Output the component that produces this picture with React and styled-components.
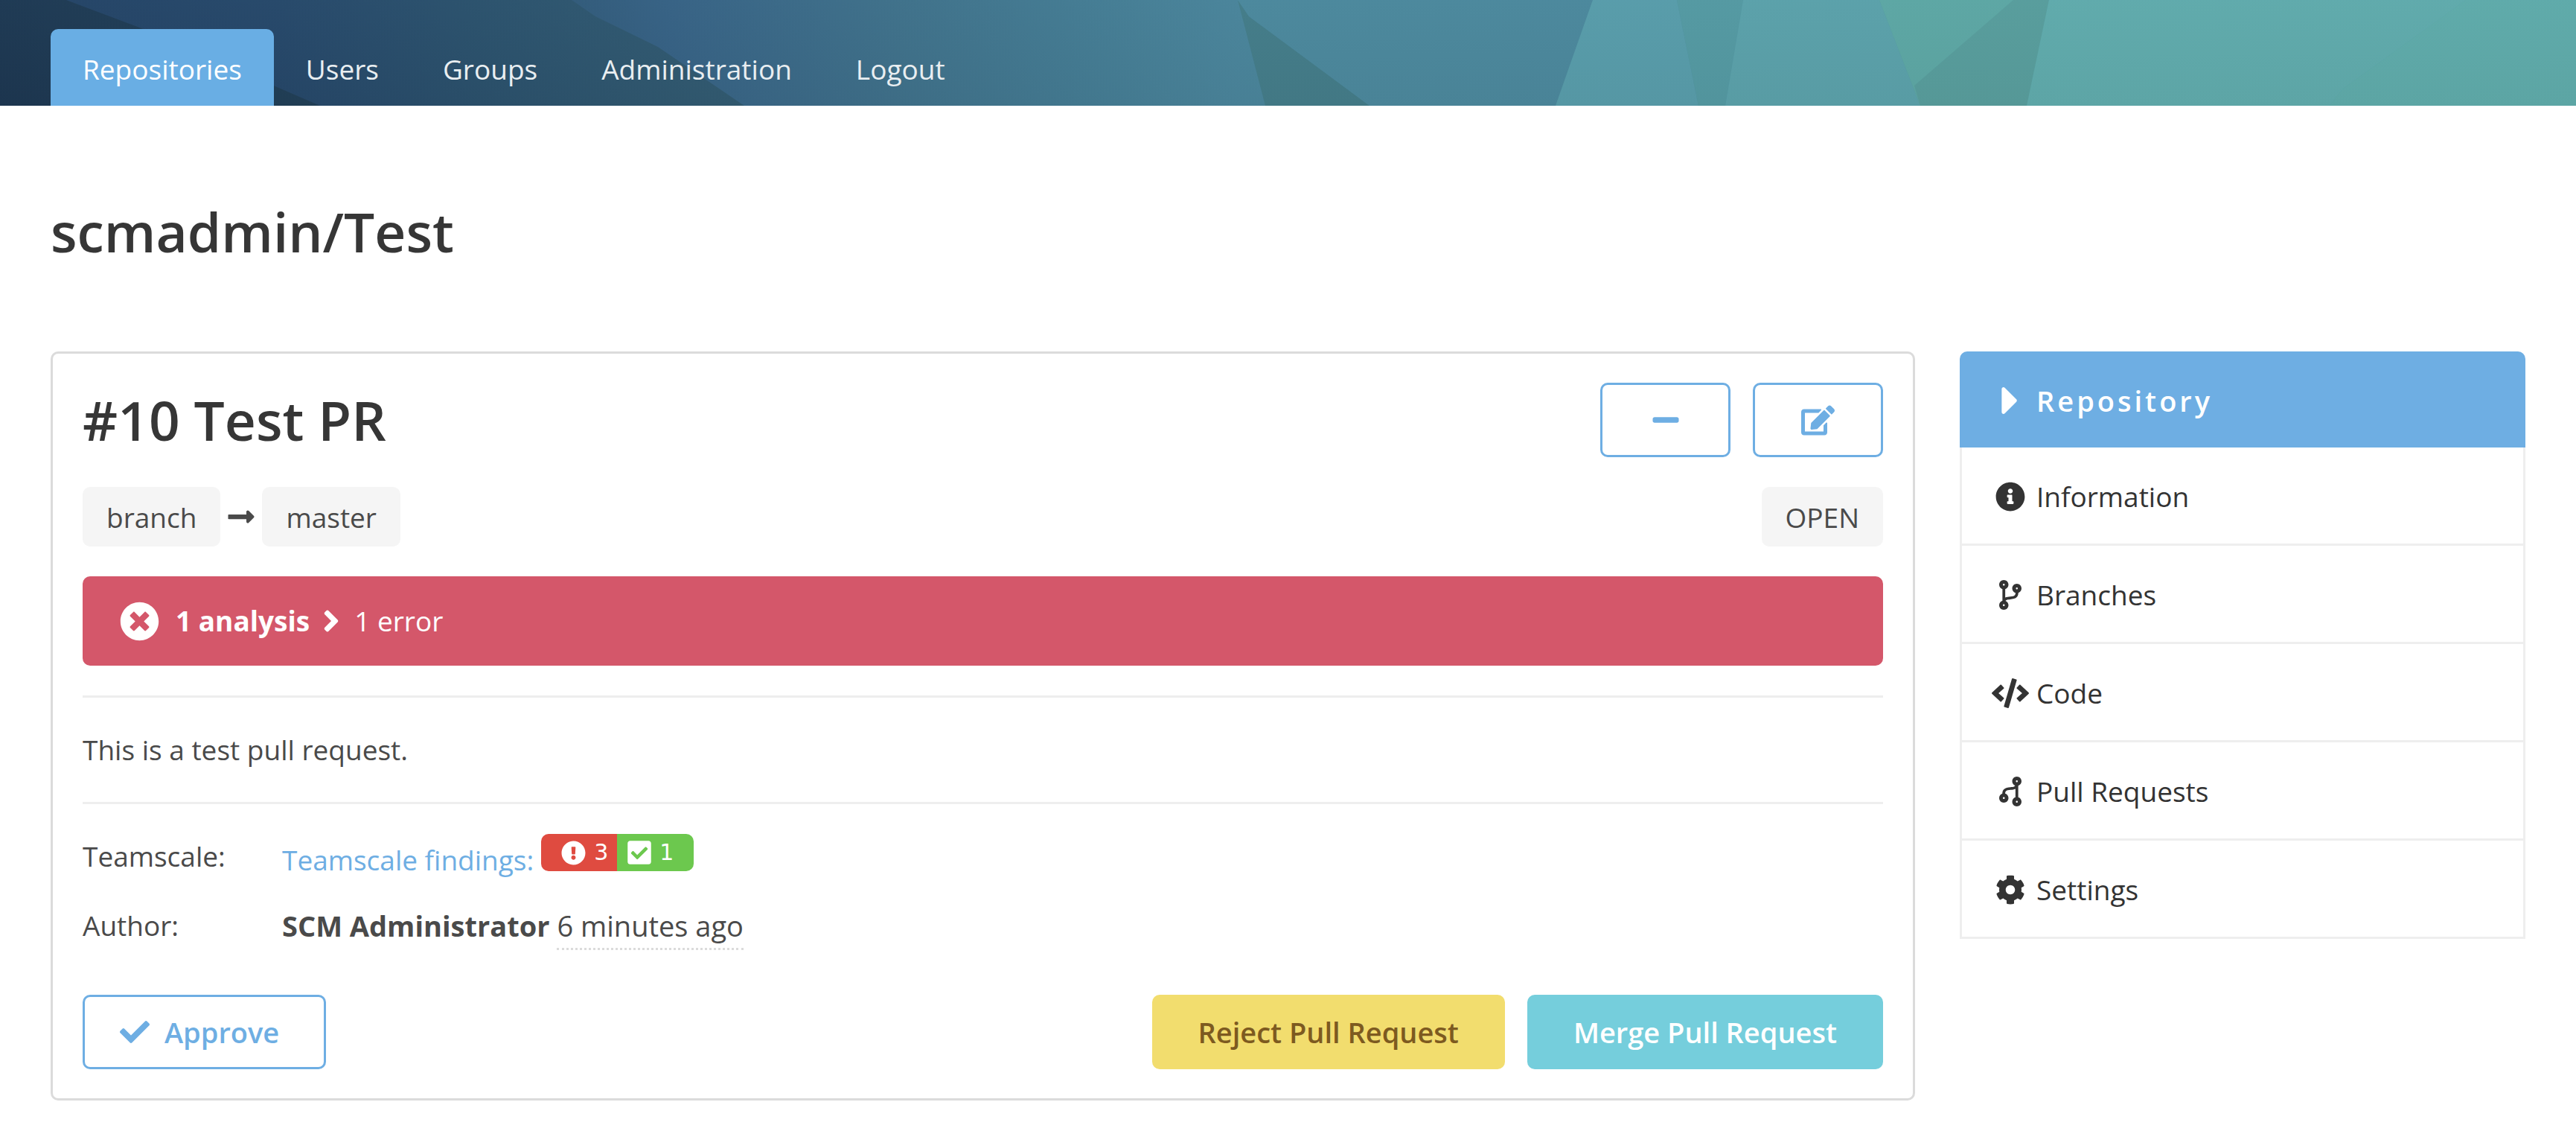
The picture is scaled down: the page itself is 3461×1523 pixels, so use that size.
import React from "react";
import styled, { createGlobalStyle, css } from "styled-components";
import {
  FaAngleRight,
  FaCaretRight,
  FaCheck,
  FaCheckSquare,
  FaCode,
  FaCodeBranch,
  FaCog,
  FaEdit,
  FaExclamationCircle,
  FaInfoCircle,
  FaLongArrowAltRight,
  FaMinus,
  FaTimesCircle,
} from "react-icons/fa";

const blue = "#6eaee3";

const GlobalStyle = createGlobalStyle`
  *, *::before, *::after { box-sizing: border-box; }
  body {
    margin: 0;
    background: #fff;
    color: #4a4a4a;
    font-family: "Segoe UI", "Open Sans", "Noto Sans", sans-serif;
    font-size: 37px;
    line-height: 60px;
  }
  h1, h2, p, ul, dl, dd, hr { margin: 0; padding: 0; }
  ul { list-style: none; }
  a { text-decoration: none; }
`;

/* ---------- header ---------- */

const Header = styled.header`
  display: grid;
  height: 142px;
  overflow: hidden;
`;

const Backdrop = styled.svg`
  grid-area: 1 / 1;
  display: block;
  width: 100%;
  height: 142px;
`;

const Nav = styled.nav`
  grid-area: 1 / 1;
  z-index: 1;
  display: flex;
  align-items: flex-end;
  padding: 0 68px;
`;

const NavLink = styled.a`
  padding: 24px 43px 19px;
  border-radius: 10px 10px 0 0;
  color: ${(p) => (p.$active ? "#fff" : "#e9eef1")};
  background: ${(p) => (p.$active ? "#69aee4" : "transparent")};
`;

/* ---------- page ---------- */

const Page = styled.main`
  padding: 124px 68px 45px;
`;

const Heading = styled.h1`
  color: #363636;
  font-size: 73px;
  font-weight: 600;
  line-height: 90px;
`;

const Columns = styled.div`
  display: grid;
  grid-template-columns: minmax(0, 1fr) 760px;
  align-items: start;
  gap: 60px;
  margin-top: 116px;
`;

const Card = styled.section`
  display: flex;
  flex-direction: column;
  gap: 40px;
  padding: 39px 40px;
  border: 3px solid #dbdbdb;
  border-radius: 10px;
`;

const Row = styled.div`
  display: flex;
  align-items: center;
  justify-content: space-between;
`;

const Group = styled.div`
  display: flex;
  align-items: center;
  gap: ${(p) => p.$gap}px;
`;

const Icon = styled.span`
  display: inline-flex;
  flex: none;
  align-items: center;
  justify-content: center;
  width: ${(p) => p.$box || p.$size}px;
  font-size: ${(p) => p.$size}px;
  line-height: 1;
  svg {
    flex: none;
    transform: ${(p) => (p.$flip ? "rotate(180deg)" : "none")};
  }
`;

const variants = {
  outline: css`
    border: 3px solid ${blue};
    background: #fff;
    color: ${blue};
  `,
  warning: css`
    background: #f2dd6e;
    color: #7d5a20;
  `,
  primary: css`
    background: #75cedc;
    color: #fff;
  `,
};

const Button = styled.button`
  display: inline-flex;
  align-items: center;
  justify-content: center;
  gap: 20px;
  height: 100px;
  padding: 0 62px;
  border: 0;
  border-radius: 10px;
  font: inherit;
  font-size: 38px;
  font-weight: 600;
  cursor: pointer;
  ${(p) => variants[p.$variant]}
`;

const IconButton = styled(Button)`
  width: 175px;
  padding: 0;
`;

const ApproveButton = styled(Button)`
  padding: 0 60px 0 47px;
`;

const Tag = styled.span`
  padding: 11px 32px 9px;
  border-radius: 10px;
  background: #f5f5f5;
`;

const Alert = styled.div`
  display: flex;
  align-items: center;
  height: 120px;
  padding: 0 50px;
  border-radius: 10px;
  background: #d4576a;
  color: #fff;
`;

const AlertTitle = styled.strong`
  margin-left: 22px;
  font-weight: 700;
`;

const AlertArrow = styled(Icon)`
  margin: 0 8px 0 6px;
`;

const Divider = styled.hr`
  height: 3px;
  border: 0;
  background: #eeeeee;
`;

const Details = styled.dl`
  display: grid;
  grid-template-columns: 268px 1fr;
  row-gap: 23px;
`;

const Value = styled.dd`
  display: flex;
  align-items: flex-start;
  gap: 10px;
`;

const FindingsLink = styled.a`
  color: ${blue};
  line-height: 70px;
`;

const Badge = styled.span`
  display: flex;
  overflow: hidden;
  border-radius: 10px;
`;

const BadgePart = styled.span`
  display: flex;
  align-items: center;
  gap: 11px;
  height: 50px;
  padding: ${(p) => (p.$last ? "0 27px 0 13px" : "0 12px 0 27px")};
  background: ${(p) => (p.$last ? "#6cc84e" : "#df4b40")};
  color: #fff;
  font-family: Verdana, "DejaVu Sans", sans-serif;
  font-size: 30px;
`;

const AuthorValue = styled(Value)`
  font-size: 38px;
`;

const Author = styled.strong`
  font-weight: 700;
`;

const Time = styled.time`
  border-bottom: 3px dotted #dbdbdb;
`;

const Actions = styled(Row)`
  margin-top: 20px;
`;

/* ---------- sidebar ---------- */

const Menu = styled.aside`
  overflow: hidden;
  border-radius: 10px 10px 0 0;
`;

const MenuTitle = styled.h2`
  display: flex;
  align-items: center;
  gap: 10px;
  height: 129px;
  padding: 3px 43px 0;
  background: ${blue};
  color: #fff;
  font-size: 38px;
  font-weight: 600;
  letter-spacing: 4px;
`;

const MenuLink = styled.a`
  display: flex;
  align-items: center;
  gap: 10px;
  height: 132px;
  padding: 3px 40px 0;
  border: 3px solid #eeeeee;
  border-top: 0;
  color: #333;
`;

const navItems = ["Repositories", "Users", "Groups", "Administration", "Logout"];

const menuItems = [
  { label: "Information", icon: FaInfoCircle, size: 40 },
  { label: "Branches", icon: FaCodeBranch, size: 40 },
  { label: "Code", icon: FaCode, size: 50 },
  { label: "Pull Requests", icon: FaCodeBranch, size: 40, flip: true },
  { label: "Settings", icon: FaCog, size: 40 },
];

function HeaderBackdrop() {
  return (
    <Backdrop viewBox="0 0 3461 142" preserveAspectRatio="none" aria-hidden="true">
      <defs>
        <linearGradient id="base" gradientUnits="userSpaceOnUse" x1="0" y1="60" x2="3461" y2="90">
          <stop offset="0" stopColor="#223f60" />
          <stop offset="0.08" stopColor="#254365" />
          <stop offset="0.17" stopColor="#2a4d68" />
          <stop offset="0.26" stopColor="#365f82" />
          <stop offset="0.35" stopColor="#3f6f88" />
          <stop offset="0.42" stopColor="#447a91" />
          <stop offset="0.48" stopColor="#4a8399" />
          <stop offset="1" stopColor="#61adab" />
        </linearGradient>
        <linearGradient id="slate" gradientUnits="userSpaceOnUse" x1="100" y1="0" x2="1000" y2="0">
          <stop offset="0" stopColor="#234063" />
          <stop offset="0.3" stopColor="#254466" />
          <stop offset="0.6" stopColor="#2a4e69" />
          <stop offset="1" stopColor="#32596f" />
        </linearGradient>
        <linearGradient id="night" x1="0" y1="0" x2="1" y2="0">
          <stop offset="0" stopColor="#1c344e" />
          <stop offset="1" stopColor="#213d54" />
        </linearGradient>
        <linearGradient id="shade" x1="0" y1="0" x2="0" y2="1">
          <stop offset="0" stopColor="#5aa8c0" stopOpacity="0.06" />
          <stop offset="1" stopColor="#204858" stopOpacity="0.06" />
        </linearGradient>
      </defs>
      <rect width="3461" height="142" fill="url(#base)" />
      <polygon points="0,0 768,0 800,22 884,63 1000,142 0,142" fill="url(#slate)" />
      <polygon points="0,0 89,0 190,38 430,142 0,142" fill="url(#night)" />
      <polygon points="1663,0 1678,22 1840,142 1700,142" fill="#447b87" />
      <polygon points="1678,22 1663,0 2140,0 2090,142 1840,142" fill="#4c879b" />
      <polygon points="2140,0 2253,0 2282,142 2090,142" fill="#599ca9" />
      <polygon points="2253,0 2342,0 2318,142 2282,142" fill="#5599a1" />
      <polygon points="2342,0 2525,0 2580,142 2318,142" fill="#5ca1a9" />
      <polygon points="2525,0 2753,0 2723,142 2580,142" fill="#5ea7a3" />
      <polygon points="2705,0 2753,0 2723,142 2580,142 2572,115" fill="#599d9b" />
      <polygon points="2753,0 3313,0 3147,120 3130,142 2723,142" fill="#61abab" />
      <polygon points="3313,0 3461,0 3461,142 3130,142 3147,120" fill="#60aba9" />
      <rect width="3461" height="142" fill="url(#shade)" />
    </Backdrop>
  );
}

function PullRequestCard() {
  return (
    <Card>
      <Row>
        <Heading as="h2">#10 Test PR</Heading>
        <Group $gap={30}>
          <IconButton type="button" $variant="outline" aria-label="Collapse">
            <Icon $size={40}><FaMinus /></Icon>
          </IconButton>
          <IconButton type="button" $variant="outline" aria-label="Edit">
            <Icon $size={45}><FaEdit /></Icon>
          </IconButton>
        </Group>
      </Row>
      <Row>
        <Group $gap={8}>
          <Tag>branch</Tag>
          <Icon $size={40}><FaLongArrowAltRight /></Icon>
          <Tag>master</Tag>
        </Group>
        <Tag>OPEN</Tag>
      </Row>
      <Alert>
        <Icon $size={53}><FaTimesCircle /></Icon>
        <AlertTitle>1 analysis</AlertTitle>
        <AlertArrow $size={46}><FaAngleRight /></AlertArrow>
        <span>1 error</span>
      </Alert>
      <Divider />
      <p>This is a test pull request.</p>
      <Divider />
      <Details>
        <dt>Teamscale:</dt>
        <Value>
          <FindingsLink href="#findings">Teamscale findings:</FindingsLink>
          <Badge>
            <BadgePart>
              <Icon $size={33}><FaExclamationCircle /></Icon>3
            </BadgePart>
            <BadgePart $last>
              <Icon $size={36} $box={33}><FaCheckSquare /></Icon>1
            </BadgePart>
          </Badge>
        </Value>
        <dt>Author:</dt>
        <AuthorValue>
          <Author>SCM Administrator</Author>
          <Time>6 minutes ago</Time>
        </AuthorValue>
      </Details>
      <Actions>
        <ApproveButton type="button" $variant="outline">
          <Icon $size={40}><FaCheck /></Icon>
          Approve
        </ApproveButton>
        <Group $gap={30}>
          <Button type="button" $variant="warning">Reject Pull Request</Button>
          <Button type="button" $variant="primary">Merge Pull Request</Button>
        </Group>
      </Actions>
    </Card>
  );
}

function RepositoryMenu() {
  return (
    <Menu>
      <MenuTitle>
        <Icon $size={62} $box={50}><FaCaretRight /></Icon>
        Repository
      </MenuTitle>
      <ul>
        {menuItems.map(({ label, icon: Glyph, size, flip }) => (
          <li key={label}>
            <MenuLink href={"#" + label}>
              <Icon $size={size} $box={50} $flip={flip}><Glyph /></Icon>
              {label}
            </MenuLink>
          </li>
        ))}
      </ul>
    </Menu>
  );
}

export default function App() {
  return (
    <>
      <GlobalStyle />
      <Header>
        <HeaderBackdrop />
        <Nav>
          {navItems.map((item, i) => (
            <NavLink key={item} href={"#" + item} $active={i === 0}>{item}</NavLink>
          ))}
        </Nav>
      </Header>
      <Page>
        <Heading>scmadmin/Test</Heading>
        <Columns>
          <PullRequestCard />
          <RepositoryMenu />
        </Columns>
      </Page>
    </>
  );
}
